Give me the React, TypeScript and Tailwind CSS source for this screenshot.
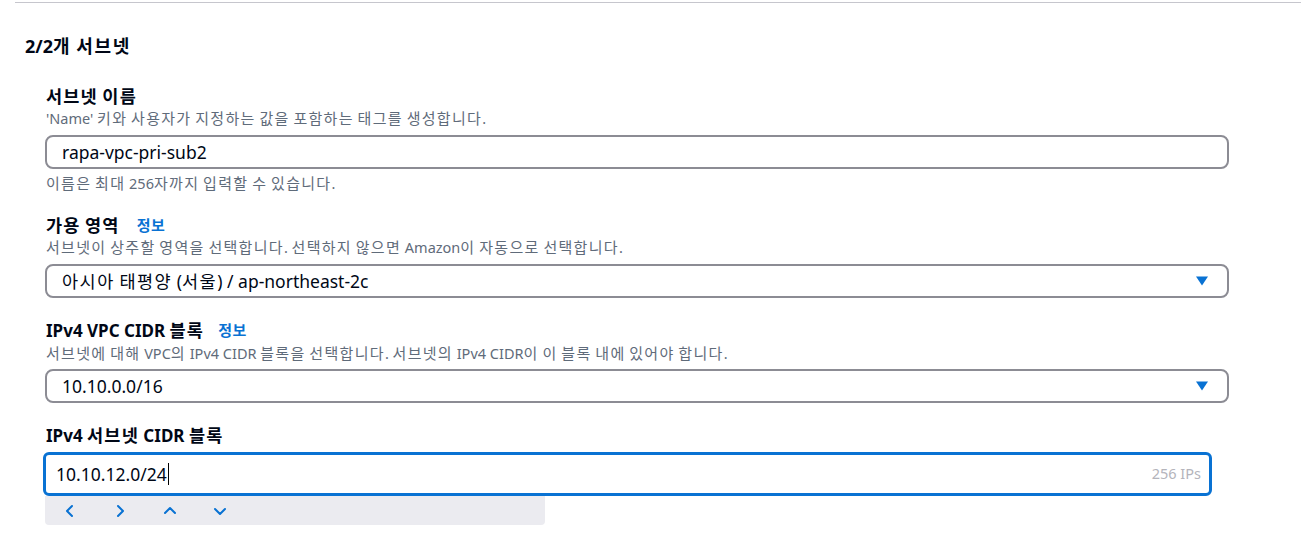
import React from "react";

const FONT = { fontFamily: '"Noto Sans", "Noto Sans CJK KR", sans-serif' };

function K({ t, k }: { t: string; k: string }) {
  const parts = t.split(/([\uAC00-\uD7A3]+)/);
  return (
    <>
      {parts.map((p, i) =>
        /[\uAC00-\uD7A3]/.test(p) ? (
          <span key={i} className={k}>
            {p}
          </span>
        ) : (
          <React.Fragment key={i}>{p}</React.Fragment>
        )
      )}
    </>
  );
}

const LBL = "text-[17.5px] tracking-[1.2px]";
const DSC = "text-[15px] tracking-[1.3px]";
const VAL = "tracking-[1.5px]";

function Caret() {
  return (
    <svg width="12" height="10" viewBox="0 0 12 10" className="shrink-0">
      <path d="M0 0.5 L12 0.5 L6 9.5 Z" fill="#0972d3" />
    </svg>
  );
}

function Chev({ d }: { d: string }) {
  return (
    <svg width="14" height="14" viewBox="0 0 14 14" fill="none" stroke="#0972d3" strokeWidth="2" strokeLinecap="round" strokeLinejoin="round">
      <path d={d} />
    </svg>
  );
}

function Info() {
  return (
    <span className="text-[15px] leading-[22px] font-semibold text-[#0972d3] tracking-[0.5px]">정보</span>
  );
}

export default function App() {
  return (
    <div className="w-[1301px] h-[536px] bg-white overflow-hidden text-[#000716]" style={FONT}>
      <div className="h-[2px]" />
      <div className="ml-[15px] h-px bg-[#c6c6cd]" />
      <div className="pl-[25px] pt-[32px]">
        <h2 className="h-[22px] flex items-center text-[18px] leading-[22px] font-bold">
          <span>
            <K t="2/2개 서브넷" k="tracking-[1.8px]" />
          </span>
        </h2>
      </div>
      <div className="pl-[45px] pr-[72px] pt-[28px]">
        {/* Field 1 */}
        <div className="h-[22px] flex items-center text-[17px] leading-[22px] font-bold pl-px">
          <span>
            <K t="서브넷 이름" k={LBL} />
          </span>
        </div>
        <div className="h-[20px] text-[14.5px] leading-[20px] text-[#5f6b7a] mt-px pl-px">
          <K t="'Name' 키와 사용자가 지정하는 값을 포함하는 태그를 생성합니다." k={DSC} />
        </div>
        <div className="mt-[7px] h-[34px] border-2 border-[#8c8c94] rounded-[8px] flex items-center pl-[15px] text-[17.5px]">
          rapa-vpc-pri-sub2
        </div>
        <div className="h-[20px] text-[14.5px] leading-[20px] text-[#5f6b7a] mt-[4px] pl-px">
          <K t="이름은 최대 256자까지 입력할 수 있습니다." k={DSC} />
        </div>

        {/* Field 2 */}
        <div className="mt-[21px] h-[22px] flex items-center gap-[17px] pl-px">
          <span className="text-[17px] leading-[22px] font-bold">
            <K t="가용 영역" k={LBL} />
          </span>
          <Info />
        </div>
        <div className="h-[20px] text-[14.5px] leading-[20px] text-[#5f6b7a] mt-px pl-px">
          <K t="서브넷이 상주할 영역을 선택합니다. 선택하지 않으면 Amazon이 자동으로 선택합니다." k={DSC} />
        </div>
        <div className="mt-[7px] h-[34px] border-2 border-[#8c8c94] rounded-[8px] flex items-center justify-between pl-[15px] pr-[19px] text-[17.5px]">
          <span>
            <K t="아시아 태평양 (서울) / ap-northeast-2c" k={VAL} />
          </span>
          <Caret />
        </div>

        {/* Field 3 */}
        <div className="mt-[21px] h-[22px] flex items-center gap-[14px] pl-px">
          <span className="text-[17px] leading-[22px] font-bold">
            <K t="IPv4 VPC CIDR 블록" k={LBL} />
          </span>
          <Info />
        </div>
        <div className="h-[20px] text-[14.5px] leading-[20px] text-[#5f6b7a] mt-[2px] pl-px">
          <K t="서브넷에 대해 VPC의 IPv4 CIDR 블록을 선택합니다. 서브넷의 IPv4 CIDR이 이 블록 내에 있어야 합니다." k={DSC} />
        </div>
        <div className="mt-[6px] h-[34px] border-2 border-[#8c8c94] rounded-[8px] flex items-center justify-between pl-[15px] pr-[19px] text-[17.5px]">
          <span>10.10.0.0/16</span>
          <Caret />
        </div>

        {/* Field 4 */}
        <div className="mt-[21px] h-[22px] flex items-center text-[17px] leading-[22px] font-bold pl-px">
          <span>
            <K t="IPv4 서브넷 CIDR 블록" k={LBL} />
          </span>
        </div>
        <div className="mt-[6px] ml-[-2px] w-[1169px] h-[44px] border-[3px] border-[#0972d3] rounded-[6px] flex items-center justify-between pl-[10px] pr-[8px]">
          <span className="text-[17.5px] flex items-center">
            10.10.12.0/24
            <span className="inline-block w-px h-[22px] bg-black ml-px" />
          </span>
          <span className="text-[14.5px] text-[#b4b4bb]">256 IPs</span>
        </div>
        <div className="w-[500px] h-[29px] bg-[#ebebf0] rounded-b-[4px] flex items-center">
          <div className="w-[50px] flex justify-center"><Chev d="M9 2 L4 7 L9 12" /></div>
          <div className="w-[50px] flex justify-center"><Chev d="M5 2 L10 7 L5 12" /></div>
          <div className="w-[50px] flex justify-center"><Chev d="M2 9 L7 4 L12 9" /></div>
          <div className="w-[50px] flex justify-center"><Chev d="M2 5 L7 10 L12 5" /></div>
        </div>
      </div>
    </div>
  );
}
